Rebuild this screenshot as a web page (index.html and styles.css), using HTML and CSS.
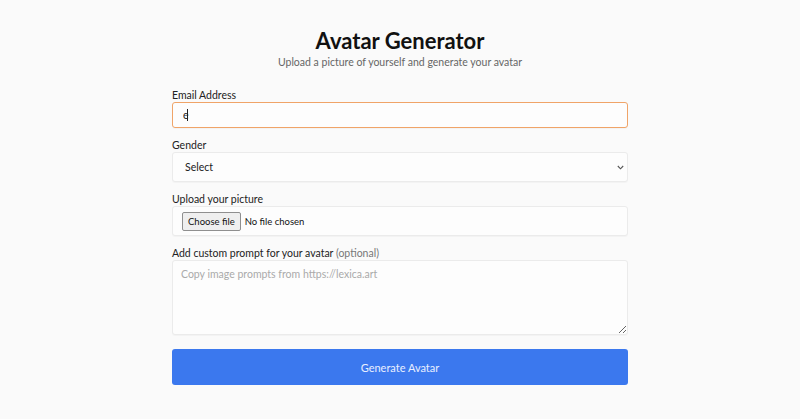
FILE: index.html
```html
<!DOCTYPE html>
<html lang="en">
<head>
<meta charset="utf-8">
<title>Avatar Generator</title>
<link rel="stylesheet" href="styles.css">
</head>
<body>
<main class="page">
  <header class="head">
    <h1 class="title">Avatar Generator</h1>
    <p class="subtitle">Upload a picture of yourself and generate your avatar</p>
  </header>
  <form class="form">
    <div class="field">
      <label class="label" for="email">Email Address</label>
      <div class="wrap">
        <input class="control control-focus" id="email" type="text" value="e">
        <span class="caret"></span>
      </div>
    </div>
    <div class="field">
      <label class="label" for="gender">Gender</label>
      <div class="wrap">
        <select class="control select" id="gender">
          <option>Select</option>
          <option>Male</option>
          <option>Female</option>
        </select>
        <svg class="chev" width="7" height="5" viewBox="0 0 7 5" aria-hidden="true"><path d="M0.8 1 L3.5 3.8 L6.2 1" fill="none" stroke="#555" stroke-width="1.1"/></svg>
      </div>
    </div>
    <div class="field">
      <label class="label" for="pic">Upload your picture</label>
      <div class="control filebox">
        <span class="filebtn">Choose file</span>
        <span class="filetext">No file chosen</span>
      </div>
    </div>
    <div class="field">
      <label class="label" for="prompt">Add custom prompt for your avatar <span class="muted">(optional)</span></label>
      <textarea class="control area" id="prompt" placeholder="Copy image prompts from https://lexica.art"></textarea>
    </div>
    <button class="submit" type="button">Generate Avatar</button>
  </form>
</main>
</body>
</html>
```
FILE: styles.css
```css
* { box-sizing: border-box; }
html, body { margin: 0; padding: 0; }
body {
  background: #fafafa;
  font-family: Lato, "Noto Sans", sans-serif;
  color: #1a1a1a;
}
.page {
  width: 456px;
  margin: 0 auto;
  padding-top: 27px;
}
.head { text-align: center; }
.title {
  margin: 0;
  font-size: 22px;
  font-weight: 700;
  line-height: 28px;
  color: #111;
}
.subtitle {
  margin: 0;
  font-size: 10.5px;
  line-height: 14px;
  color: #666;
}
.form {
  margin-top: 19px;
  display: flex;
  flex-direction: column;
}
.field {
  display: flex;
  flex-direction: column;
  margin-bottom: 10px;
}
.label {
  font-size: 10.5px;
  line-height: 14px;
  color: #222;
}
.muted { color: #777; }
.wrap { position: relative; }
.control {
  display: block;
  width: 100%;
  border: 1px solid #ebebeb;
  border-radius: 3px;
  background: #fdfdfd;
  font-family: inherit;
  font-size: 10.5px;
  color: #222;
  box-shadow: 0 1px 1px rgba(0,0,0,0.03);
  outline: none;
}
.control-focus {
  height: 26px;
  padding: 0 10px;
  border: 1px solid #f0a468;
}
.caret {
  position: absolute;
  left: 186px;
  left: 15px;
  top: 7px;
  width: 1px;
  height: 12px;
  background: #222;
}
.select {
  height: 30px;
  padding: 0 12px;
  appearance: none;
  -webkit-appearance: none;
}
.chev {
  position: absolute;
  right: 4px;
  top: 13px;
}
.filebox {
  height: 30px;
  display: flex;
  align-items: center;
  padding: 0 9px;
  gap: 4px;
  font-size: 9.5px;
}
.filebtn {
  background: #efefef;
  border: 1px solid #8f8f8f;
  border-radius: 2px;
  padding: 2px 5px;
  line-height: 13px;
  color: #111;
}
.filetext { color: #111; }
.area {
  height: 75px;
  padding: 7px 8px;
  resize: vertical;
}
.area::placeholder { color: #aaa; }
.submit {
  margin-top: 4px;
  height: 36px;
  border: none;
  border-radius: 3px;
  background: #3b78ee;
  color: #e8efff;
  font-family: inherit;
  font-size: 11px;
  cursor: pointer;
}
```
